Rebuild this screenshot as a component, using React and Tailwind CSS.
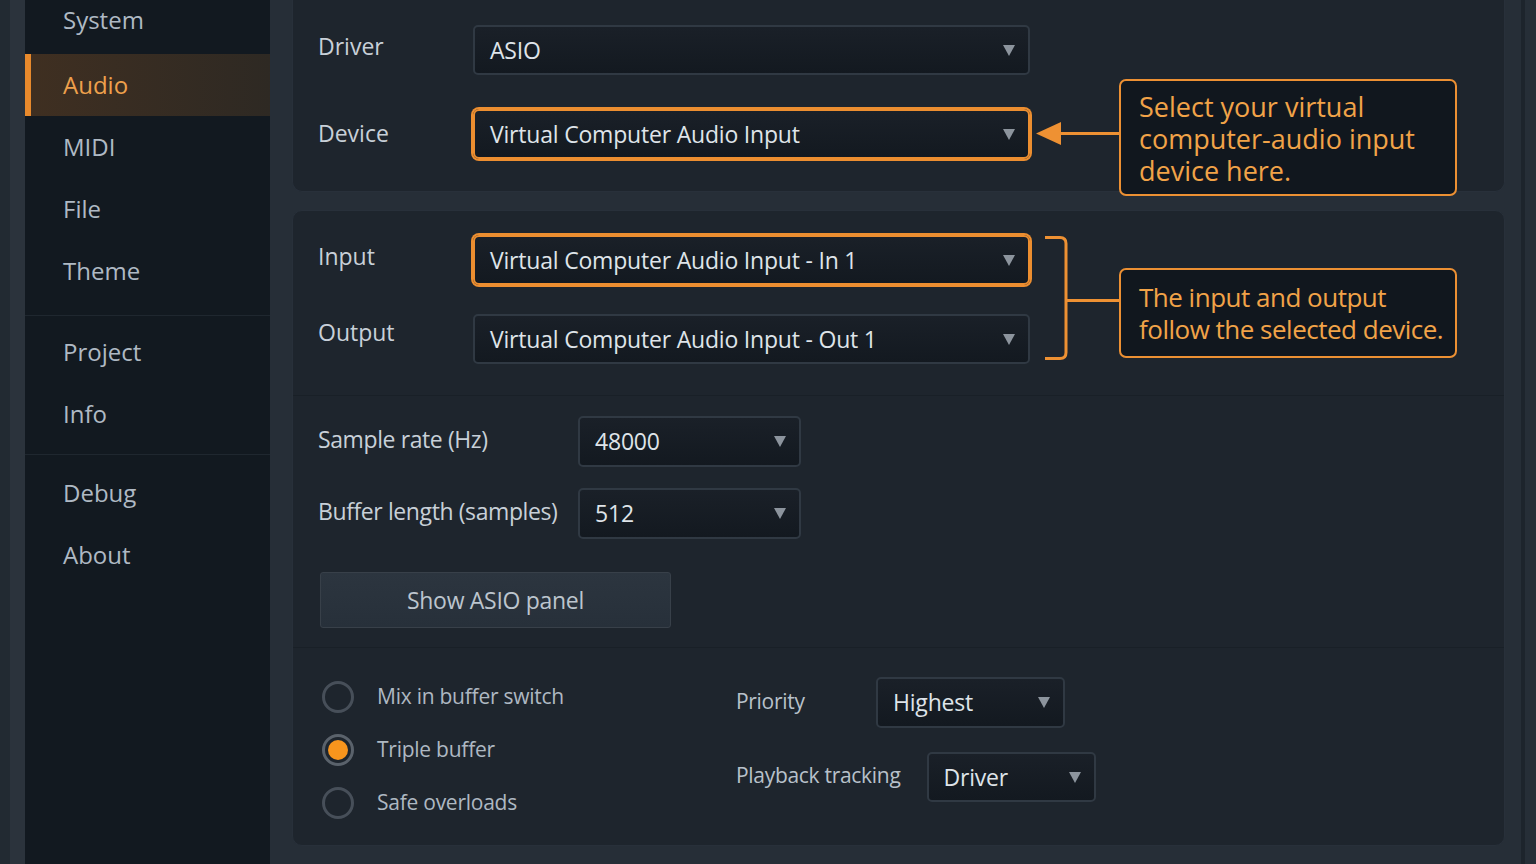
import React from "react";

const Caret = () => (
  <svg width="12" height="11" viewBox="0 0 12 11" className="shrink-0">
    <polygon points="0,0 12,0 6,11" fill="#8c949d" />
  </svg>
);

function Select({ value, className = "", hl = false }) {
  const base =
    "flex shrink-0 items-center justify-between bg-linear-to-b from-[#1a2028] to-[#131920] pl-[15px] pr-[13px] text-[23px] tracking-[-0.2px] text-[#dfe4e9]";
  const border = hl
    ? "rounded-[6px] border-2 border-[#ec8e30] ring-2 ring-[#ec8e30]"
    : "rounded-[5px] border-2 border-[#303943]";
  return (
    <div className={`${base} ${border} ${className}`}>
      <span className="leading-none">{value}</span>
      <Caret />
    </div>
  );
}

function NavItem({ children, active = false, className = "" }) {
  if (active) {
    return (
      <div className="flex h-[62px] items-center border-l-[6px] border-[#e98a2c] bg-linear-to-r from-[#3f2f21] to-[#2e2923] pl-[32px] text-[#eea04c]">
        {children}
      </div>
    );
  }
  return <div className={`flex h-[62px] items-center pl-[38px] ${className}`}>{children}</div>;
}

function Radio({ checked = false, label }) {
  return (
    <div className="flex h-[53px] items-center">
      <div
        className={`flex h-[32px] w-[32px] items-center justify-center rounded-full border-[3px] ${
          checked ? "border-[#5a626b] bg-[#1e252d]" : "border-[#474f59]"
        }`}
      >
        {checked && <div className="h-[20px] w-[20px] rounded-full bg-[#f7951d]" />}
      </div>
      <span className="ml-[23px] text-[21px] tracking-[-0.25px] text-[#aeb8c2]">{label}</span>
    </div>
  );
}

function CalloutLine({ children }) {
  return <div className="flex h-[32px] items-center whitespace-nowrap leading-none">{children}</div>;
}

export default function App() {
  return (
    <div className="relative flex h-[864px] w-[1536px] overflow-hidden bg-[#262e37] font-['Open_Sans',sans-serif]">
      {/* left edge strips */}
      <div className="w-[10px] shrink-0 bg-[#222a32]" />
      <div className="w-[15px] shrink-0 bg-[#2b333c]" />

      {/* sidebar */}
      <aside className="flex w-[245px] shrink-0 flex-col bg-[#121920] text-[24px] text-[#afb9c4]">
        <div className="-mt-[8px] flex flex-col border-b border-[#1f272f] pb-[13px]">
          <NavItem className="pb-[6px]">System</NavItem>
          <NavItem active>Audio</NavItem>
          <NavItem>MIDI</NavItem>
          <NavItem>File</NavItem>
          <NavItem>Theme</NavItem>
        </div>
        <div className="flex flex-col border-b border-[#1f272f] pb-[9px] pt-[5px]">
          <NavItem>Project</NavItem>
          <NavItem>Info</NavItem>
        </div>
        <div className="flex flex-col pt-[7px]">
          <NavItem>Debug</NavItem>
          <NavItem>About</NavItem>
        </div>
      </aside>

      {/* main */}
      <main className="ml-[22px] flex w-[1213px] shrink-0 flex-col text-[#c8d0d8]">
        {/* panel 1 */}
        <section className="h-[192px] rounded-b-[10px] border border-t-0 border-[#28303a] bg-[#1e252d] pl-[25px] pt-[25px]">
          <div className="flex h-[50px] items-center">
            <span className="w-[155px] pb-[8px] text-[23px]">Driver</span>
            <Select value="ASIO" className="h-[50px] w-[557px]" />
          </div>
          <div className="mt-[34px] flex h-[50px] items-center">
            <span className="w-[155px] pb-[2px] text-[23px]">Device</span>
            <Select value="Virtual Computer Audio Input" hl className="h-[50px] w-[557px]" />
          </div>
        </section>

        {/* panel 2 */}
        <section className="mt-[18px] flex h-[636px] flex-col rounded-[10px] border border-[#28303a] bg-[#1e252d]">
          {/* input / output */}
          <div className="h-[185px] border-b border-[#192027] pl-[25px] pt-[24px]">
            <div className="flex h-[50px] items-center">
              <span className="w-[155px] pb-[8px] text-[23px]">Input</span>
              <Select value="Virtual Computer Audio Input - In 1" hl className="h-[50px] w-[557px]" />
            </div>
            <div className="mt-[29px] flex h-[50px] items-center">
              <span className="w-[155px] pb-[14px] text-[23px]">Output</span>
              <Select value="Virtual Computer Audio Input - Out 1" className="h-[50px] w-[557px]" />
            </div>
          </div>

          {/* sample rate / buffer */}
          <div className="h-[252px] border-b border-[#192027] pl-[25px] pt-[20px]">
            <div className="flex h-[51px] items-center">
              <span className="w-[260px] pb-[4px] text-[23px] tracking-[-0.4px]">Sample rate (Hz)</span>
              <Select value="48000" className="h-[51px] w-[223px]" />
            </div>
            <div className="mt-[21px] flex h-[51px] items-center">
              <span className="w-[260px] pb-[4px] text-[23px] tracking-[-0.4px]">Buffer length (samples)</span>
              <Select value="512" className="h-[51px] w-[223px]" />
            </div>
            <button className="ml-[2px] mt-[33px] flex h-[56px] w-[351px] items-center justify-center rounded-[3px] border border-[#384049] bg-linear-to-b from-[#2c353f] to-[#27303a] text-[23px] tracking-[-0.3px] text-[#bcc5ce]">
              Show ASIO panel
            </button>
          </div>

          {/* options */}
          <div className="flex pl-[29px]">
            <div className="flex w-[414px] flex-col pt-[22px]">
              <Radio label="Mix in buffer switch" />
              <Radio checked label="Triple buffer" />
              <Radio label="Safe overloads" />
            </div>
            <div className="flex flex-col pt-[29px] text-[21px] tracking-[-0.3px] text-[#b8c1ca]">
              <div className="flex h-[51px] items-center">
                <span className="w-[140px] pb-[2px]">Priority</span>
                <Select value="Highest" className="h-[51px] w-[189px]" />
              </div>
              <div className="mt-[24px] flex h-[50px] items-center">
                <span className="pb-[2px]">Playback tracking</span>
                <Select value="Driver" className="ml-[26px] h-[50px] w-[169px]" />
              </div>
            </div>
          </div>
        </section>
      </main>

      {/* right edge */}
      <div className="ml-[16px] w-[4px] shrink-0 bg-[#1d242c]" />

      {/* annotation: device */}
      <svg className="absolute left-[1034px] top-[120px]" width="90" height="28" viewBox="0 0 90 28">
        <line x1="20" y1="13.5" x2="86" y2="13.5" stroke="#ee9133" strokeWidth="3" />
        <polygon points="2,13.5 27,2 27,25" fill="#ee9133" />
      </svg>
      <div className="absolute left-[1119px] top-[79px] flex h-[117px] w-[338px] flex-col rounded-[7px] border-2 border-[#ec9033] bg-[#11171e] pl-[18px] pt-[9px] text-[27px] text-[#f1a348]">
        <CalloutLine>Select your virtual</CalloutLine>
        <CalloutLine>computer-audio input</CalloutLine>
        <CalloutLine>device here.</CalloutLine>
      </div>

      {/* annotation: input/output bracket */}
      <svg className="absolute left-[1040px] top-[230px]" width="82" height="136" viewBox="0 0 82 136">
        <path
          d="M5 7.5 H20 Q26 7.5 26 13.5 V122.5 Q26 128.5 20 128.5 H5"
          fill="none"
          stroke="#ee9133"
          strokeWidth="3"
        />
        <line x1="26" y1="70.5" x2="82" y2="70.5" stroke="#ee9133" strokeWidth="3" />
      </svg>
      <div className="absolute left-[1119px] top-[268px] flex h-[90px] w-[338px] flex-col rounded-[7px] border-2 border-[#ec9033] bg-[#11171e] pl-[18px] pt-[11px] text-[26px] tracking-[-0.5px] text-[#f1a348]">
        <CalloutLine>The input and output</CalloutLine>
        <CalloutLine>follow the selected device.</CalloutLine>
      </div>
    </div>
  );
}
